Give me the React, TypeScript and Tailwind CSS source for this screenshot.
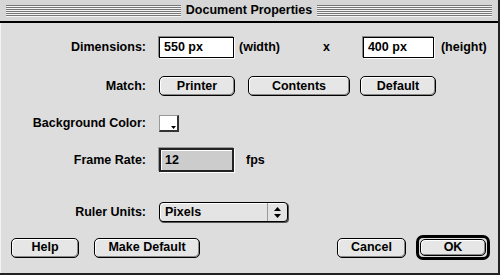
import React from 'react';

const font = { fontFamily: '"Liberation Sans", Arial, sans-serif' };

const MacButton = ({ label, className = '' }: { label: string; className?: string }) => (
    <div
        className={`h-[20px] rounded-[5px] border border-black bg-[#e6e6e6] shadow-[inset_1px_1px_0_#ffffff,inset_-1px_-1px_0_#888888] flex items-center justify-center text-[12.5px] font-bold leading-none text-black ${className}`}
    >
        {label}
    </div>
);

const TextField = ({ value, className = '' }: { value: string; className?: string }) => (
    <div
        className={`h-[21px] border border-black bg-white shadow-[-1px_-1px_0_#888888,1px_1px_0_#ffffff] flex items-center pl-[4px] text-[12.5px] font-bold text-black ${className}`}
    >
        {value}
    </div>
);

const Label = ({ children }: { children: React.ReactNode }) => (
    <div className="w-[145px] shrink-0 text-right text-[12.5px] font-bold text-black leading-none">{children}</div>
);

export default function App() {
    return (
        <div
            style={font}
            className="w-[500px] h-[275px] bg-[#dddddd] border-r-2 border-b-2 border-[#222222] flex flex-col select-none"
        >
            {/* Title bar */}
            <div className="h-[23px] shrink-0 bg-[#d6d6d6] border-b-2 border-black flex items-center px-[6px] gap-[4px]">
                <div className="flex-1 h-[12px] bg-[repeating-linear-gradient(to_bottom,#777777_0px,#777777_1px,#f4f4f4_1px,#f4f4f4_2px)]" />
                <div className="text-[12.5px] font-bold text-black leading-none px-[1px]">Document Properties</div>
                <div className="flex-1 h-[12px] bg-[repeating-linear-gradient(to_bottom,#777777_0px,#777777_1px,#f4f4f4_1px,#f4f4f4_2px)]" />
            </div>

            {/* Body */}
            <div className="flex-1 flex flex-col border-l border-[#f4f4f4]">
                {/* Dimensions */}
                <div className="flex items-center mt-[14px] h-[21px]">
                    <Label>Dimensions:</Label>
                    <TextField value="550 px" className="ml-[13px] w-[75px]" />
                    <div className="ml-[5px] text-[12.5px] font-bold">(width)</div>
                    <div className="ml-[43px] text-[12.5px] font-bold">x</div>
                    <TextField value="400 px" className="ml-[33px] w-[71px]" />
                    <div className="ml-[7px] text-[12.5px] font-bold">(height)</div>
                </div>

                {/* Match */}
                <div className="flex items-center mt-[18px] h-[20px]">
                    <Label>Match:</Label>
                    <MacButton label="Printer" className="ml-[13px] w-[76px]" />
                    <MacButton label="Contents" className="ml-[13px] w-[102px]" />
                    <MacButton label="Default" className="ml-[10px] w-[76px]" />
                </div>

                {/* Background color */}
                <div className="flex items-center mt-[18px] h-[18px]">
                    <Label>Background Color:</Label>
                    <div className="ml-[13px] relative w-[20px] h-[17px] bg-white border-l border-t border-[#999999] border-r-2 border-b-2 border-r-[#333333] border-b-[#333333]">
                        <svg className="absolute right-[1px] bottom-[1px]" width="5" height="3" viewBox="0 0 5 3">
                            <polygon points="0,0 5,0 2.5,3" fill="#000" />
                        </svg>
                    </div>
                </div>

                {/* Frame rate */}
                <div className="flex items-center mt-[16px] h-[24px]">
                    <Label>Frame Rate:</Label>
                    <div className="ml-[13px] w-[75px] h-[24px] border-2 border-[#222222] bg-[#cccccc] shadow-[inset_1px_1px_0_#ffffff,-1px_-1px_0_#999999,1px_1px_0_#ffffff] flex items-center pl-[4px] text-[12.5px] font-bold">
                        12
                    </div>
                    <div className="ml-[12px] text-[12.5px] font-bold">fps</div>
                </div>

                {/* Ruler units */}
                <div className="flex items-center mt-[30px] h-[20px]">
                    <Label>Ruler Units:</Label>
                    <div className="ml-[13px] w-[129px] h-[20px] rounded-[4px] border border-black bg-[#e4e4e4] shadow-[inset_1px_1px_0_#ffffff,1px_1px_0_#555555] flex items-stretch">
                        <div className="flex-1 flex items-center pl-[5px] text-[12.5px] font-bold">Pixels</div>
                        <div className="w-[20px] border-l border-[#999999] flex items-center justify-center">
                            <svg width="7" height="11" viewBox="0 0 7 11">
                                <polygon points="3.5,0 7,4 0,4" fill="#000" />
                                <polygon points="0,7 7,7 3.5,11" fill="#000" />
                            </svg>
                        </div>
                    </div>
                </div>

                {/* Bottom buttons */}
                <div className="flex items-center mt-[13px] h-[25px] pl-[10px]">
                    <MacButton label="Help" className="w-[68px]" />
                    <MacButton label="Make Default" className="ml-[15px] w-[106px]" />
                    <MacButton label="Cancel" className="ml-auto w-[69px]" />
                    <div className="ml-[10px] mr-[8px] w-[74px] h-[25px] rounded-[7px] border-[3px] border-black bg-[#dddddd] p-[1px] flex">
                        <MacButton label="OK" className="flex-1 h-auto rounded-[4px]" />
                    </div>
                </div>
            </div>
        </div>
    );
}
